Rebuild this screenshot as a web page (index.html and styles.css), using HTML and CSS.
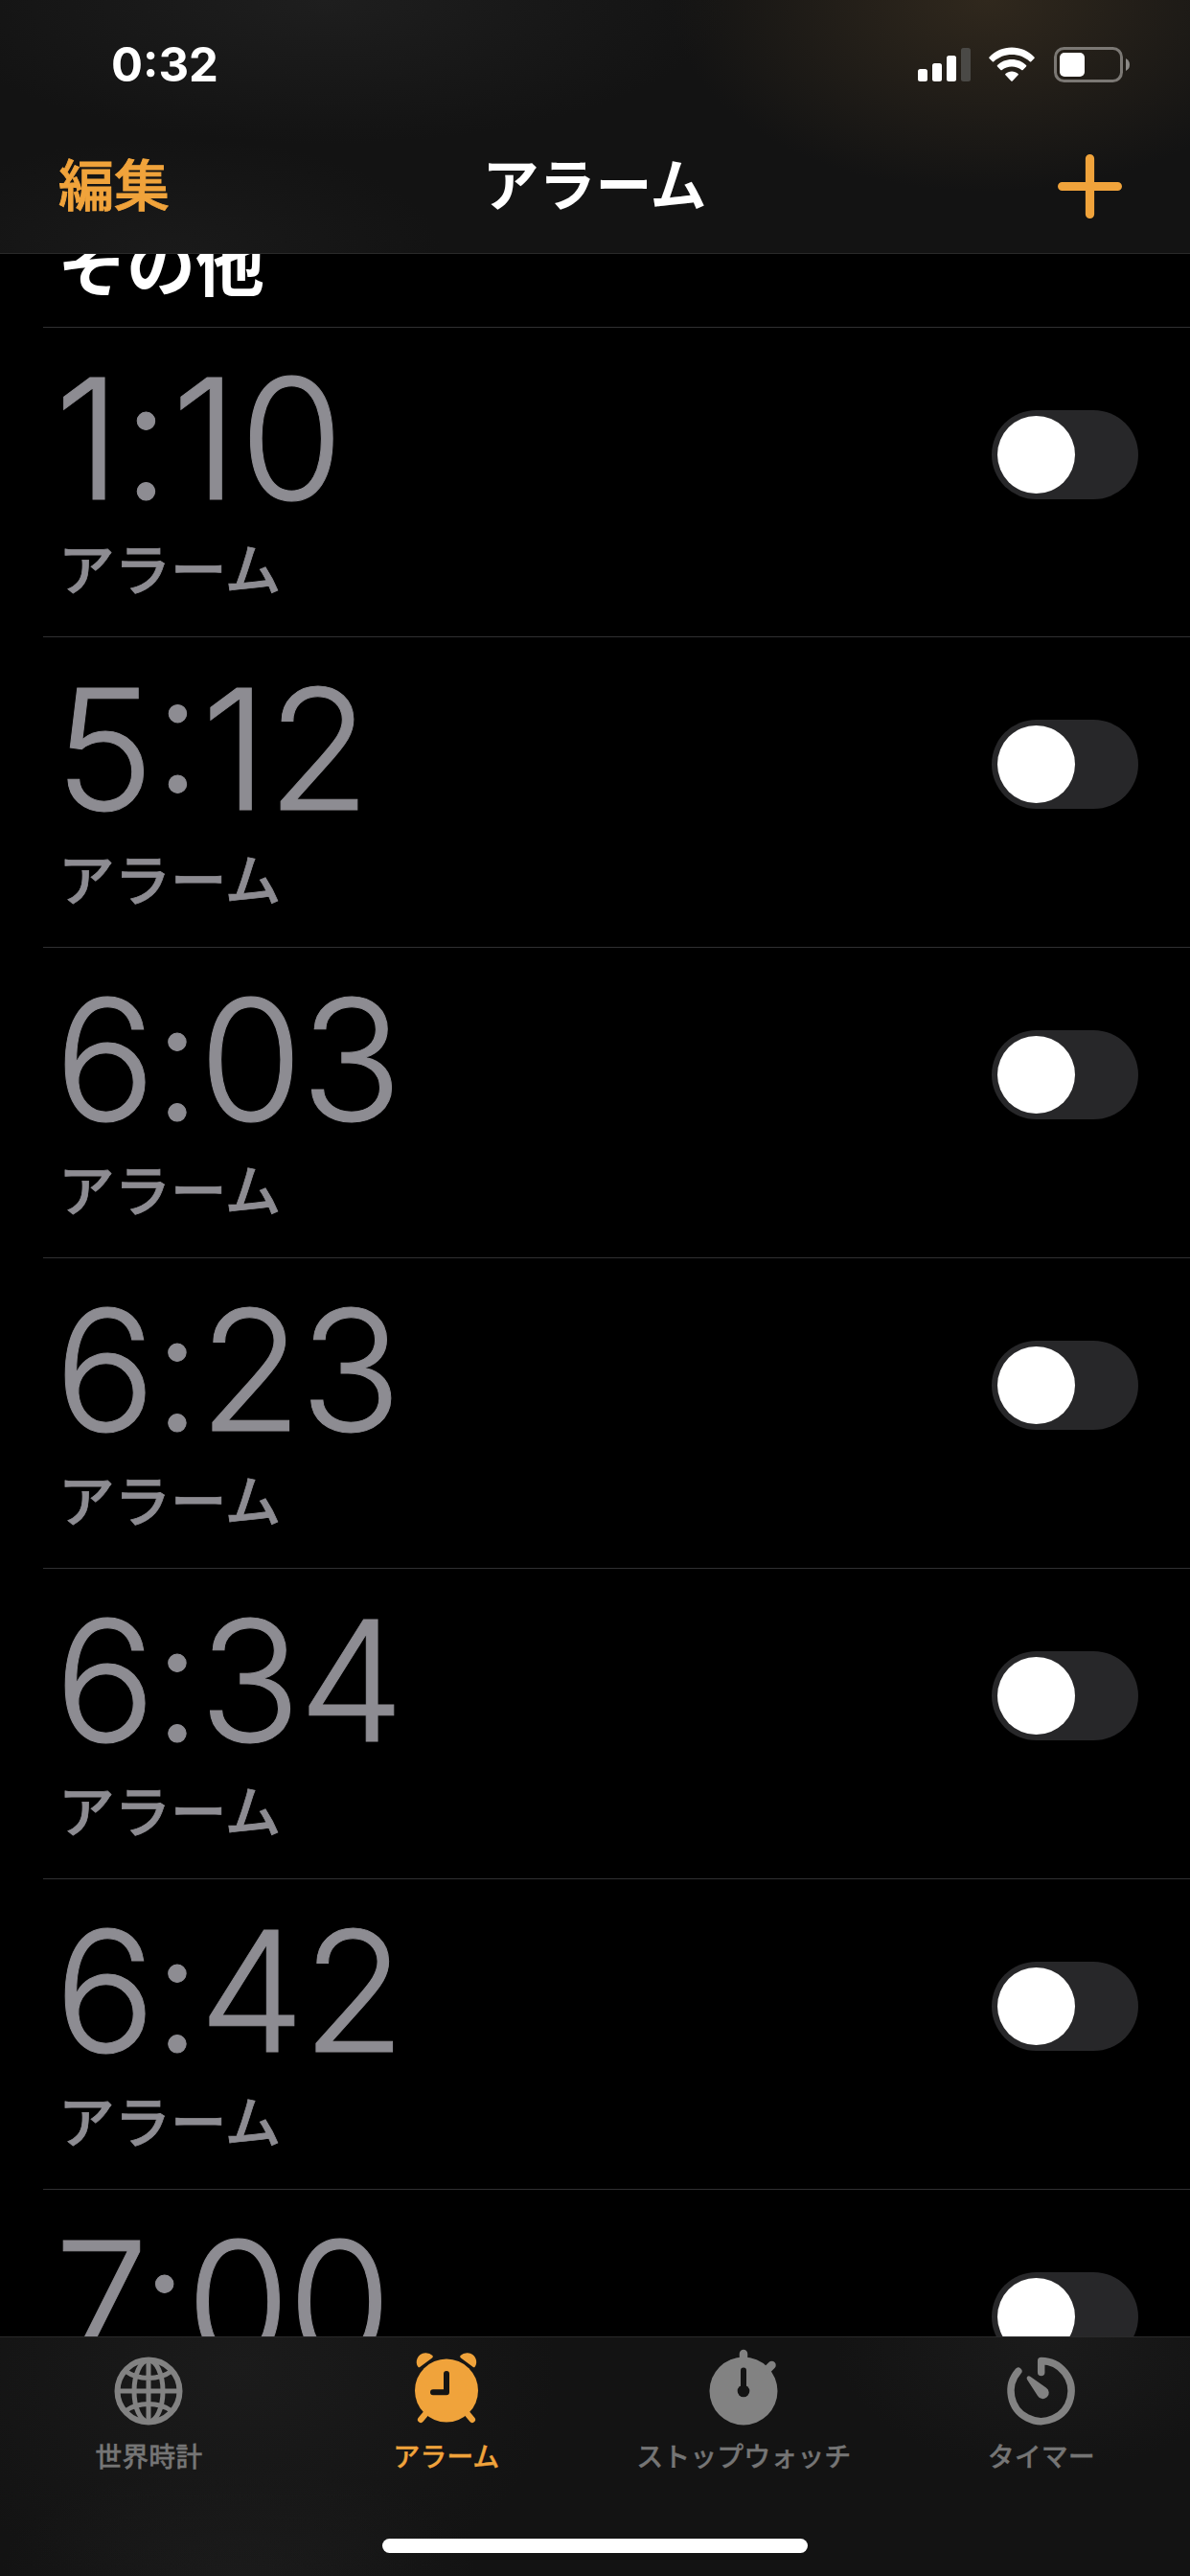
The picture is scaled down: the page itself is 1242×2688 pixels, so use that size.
FILE: index.html
```
<!DOCTYPE html>
<html lang="ja">
<head>
  <meta charset="UTF-8" />
  <meta name="viewport" content="width=device-width, initial-scale=1.0"/>
  <title>アラーム</title>
  <link rel="stylesheet" href="styles.css">
</head>
<body>
  <div class="phone">
    <header class="header">
      <div class="status-bar">
        <span class="clock">0:32</span>
        <div class="status-icons">
          <svg class="signal" width="55" height="36" viewBox="0 0 55 36" fill="#fff">
            <rect x="0" y="22" width="10" height="13" rx="2.5"/>
            <rect x="15" y="16" width="10" height="19" rx="2.5"/>
            <rect x="30" y="8" width="10" height="27" rx="2.5"/>
            <rect x="45" y="0" width="10" height="35" rx="2.5" fill="#4a4946"/>
          </svg>
          <svg class="wifi" width="48" height="37" viewBox="0 0 48 37" fill="#fff">
            <path d="M24 0.5C33 0.5 41.500 4.200 47.400 10.400Q48.200 11.200 47.400 12L44.200 15.200Q43.500 15.800 42.800 15.200C37.800 10.600 31 8 24 8S10.200 10.600 5.200 15.200Q4.500 15.800 3.800 15.200L0.600 12Q-0.200 11.200 0.600 10.400C6.500 4.200 15 0.500 24 0.500Z"/>
            <path d="M24 13C29.800 13 35.200 15.200 39 19Q39.800 19.800 39 20.600L35.600 24Q34.900 24.600 34.200 24C31.500 21.700 27.900 20.400 24 20.400S16.500 21.700 13.800 24Q13.100 24.600 12.400 24L9 20.600Q8.200 19.800 9 19C12.800 15.200 18.200 13 24 13Z"/>
            <path d="M24 25.500C26.500 25.500 28.800 26.400 30.600 27.900Q31.300 28.600 30.600 29.300L24.700 35.500Q24 36.200 23.300 35.500L17.400 29.300Q16.700 28.600 17.400 27.900C19.200 26.400 21.500 25.500 24 25.500Z"/>
          </svg>
          <svg class="battery" width="80" height="37" viewBox="0 0 80 37">
            <rect x="1.500" y="1.500" width="69" height="34" rx="9" fill="none" stroke="#7b7874" stroke-width="3"/>
            <rect x="6" y="6" width="26" height="25" rx="5" fill="#fff"/>
            <path d="M75 12Q79 14 79 18.500T75 25Z" fill="#8b8986"/>
          </svg>
        </div>
      </div>
      <nav class="nav-bar">
        <a class="edit">編集</a>
        <h1>アラーム</h1>
        <a class="add">
          <svg width="67" height="67" viewBox="0 0 67 67" stroke="#f0a33b" stroke-width="9.200" stroke-linecap="round">
            <path d="M33.500 4.600V62.400M4.600 33.500H62.400"/>
          </svg>
        </a>
      </nav>
    </header>

    <main class="alarms">
      <h2>その他</h2>
      <ul>
        <li class="alarm"><div><p class="time wide">1:10</p><p class="label">アラーム</p></div><span class="toggle"></span></li>
        <li class="alarm"><div><p class="time normal">5:12</p><p class="label">アラーム</p></div><span class="toggle"></span></li>
        <li class="alarm"><div><p class="time">6:03</p><p class="label">アラーム</p></div><span class="toggle"></span></li>
        <li class="alarm"><div><p class="time">6:23</p><p class="label">アラーム</p></div><span class="toggle"></span></li>
        <li class="alarm"><div><p class="time">6:34</p><p class="label">アラーム</p></div><span class="toggle"></span></li>
        <li class="alarm"><div><p class="time">6:42</p><p class="label">アラーム</p></div><span class="toggle"></span></li>
        <li class="alarm"><div><p class="time">7:00</p></div><span class="toggle"></span></li>
      </ul>
    </main>

    <footer class="tab-bar">
      <div class="tabs">
        <a class="tab">
          <svg width="80" height="80" viewBox="0 0 80 80" fill="none" stroke="#828282" stroke-width="5">
            <circle cx="40" cy="40" r="32.500" stroke-width="6"/>
            <ellipse cx="40" cy="40" rx="15" ry="32"/>
            <path d="M40 8V72M8 40H72M16.500 19.500Q26 26.500 40 26.500T63.500 19.500M16.500 60.500Q26 53.500 40 53.500T63.500 60.500"/>
          </svg>
          <span>世界時計</span>
        </a>
        <a class="tab active">
          <svg width="80" height="80" viewBox="0 0 80 80" fill="#f0a33b">
            <circle cx="40" cy="39.500" r="33"/>
            <path d="M10.500 15C6.500 10 9.500 0.500 18 0.200Q22.500 0 25.500 3Q26.500 4.200 25 5.500L12.500 14.800Q11.200 15.800 10.500 15Z"/>
            <path d="M69.500 15C73.500 10 70.500 0.500 62 0.200Q57.500 0 54.500 3Q53.500 4.200 55 5.500L67.500 14.800Q68.800 15.800 69.500 15Z"/>
            <path d="M18 64L13.200 69.800M62 64L66.800 69.800" stroke="#f0a33b" stroke-width="6.500" stroke-linecap="round"/>
            <path d="M40 22V41.300H26" fill="none" stroke="#141414" stroke-width="6" stroke-linecap="round" stroke-linejoin="round"/>
          </svg>
          <span>アラーム</span>
        </a>
        <a class="tab">
          <svg width="80" height="80" viewBox="0 0 80 80" fill="#828282" overflow="visible">
            <circle cx="40" cy="40" r="35.500"/>
            <path d="M40 1V8M65.500 17L69.500 13" stroke="#828282" stroke-width="8.500" stroke-linecap="round"/>
            <path d="M40 18.500V38" stroke="#131313" stroke-width="6" stroke-linecap="round"/>
            <circle cx="40" cy="40" r="6.300" fill="#131313"/>
          </svg>
          <span>ストップウォッチ</span>
        </a>
        <a class="tab">
          <svg width="80" height="80" viewBox="0 0 80 80" fill="#828282">
            <path d="M39.700 20.500V8.500A31.500 31.500 0 1 1 15.800 19.300" fill="none" stroke="#828282" stroke-width="7.500" stroke-linecap="round" stroke-linejoin="round"/>
            <path d="M25.200 25Q26.500 23.700 28.500 25L44.800 36.500A6.300 6.300 0 1 1 36 45L25 28Q24 26.200 25.200 25Z"/>
          </svg>
          <span>タイマー</span>
        </a>
      </div>
      <div class="home-indicator"></div>
    </footer>
  </div>
</body>
</html>
```
FILE: styles.css
```
* {
  box-sizing: border-box;
  margin: 0;
  padding: 0;
}

body {
  background: #000;
  color: #fff;
  font-family: Inter, 'Noto Sans CJK JP', sans-serif;
}

.phone {
  display: flex;
  flex-direction: column;
  width: 1242px;
  height: 2688px;
  overflow: hidden;
}

/* header */
.header {
  flex: none;
  height: 265px;
  border-bottom: 1px solid #2a2a2a;
  background:
    radial-gradient(ellipse 330px 200px at 1030px 0, #30281d, transparent),
    radial-gradient(ellipse 420px 150px at 340px 0, #1e1e1e, transparent),
    radial-gradient(ellipse 280px 120px at 180px 264px, #1a1a1a, transparent),
    #131313;
}

.status-bar {
  display: flex;
  justify-content: space-between;
  height: 132px;
  padding: 39px 62px 0 116px;
}

.clock {
  font-size: 49px;
  font-weight: 700;
  line-height: 58px;
}

.status-icons {
  display: flex;
  align-items: flex-start;
  padding-top: 10px;
}

.signal {
  margin-top: 1px;
}

.wifi {
  margin: 0 20px 0 19px;
}

.nav-bar {
  display: grid;
  grid-template-columns: 1fr auto 1fr;
  align-items: center;
  height: 124px;
  padding: 0 71px 0 61px;
}

.nav-bar h1 {
  margin-left: 9px;
  font-size: 59px;
  font-weight: 700;
  line-height: 80px;
}

.edit {
  color: #f0a33b;
  font-size: 58px;
  font-weight: 500;
  line-height: 80px;
  -webkit-text-stroke: 0.9px;
}

.add {
  justify-self: end;
  height: 67px;
}

/* alarm list */
.alarms {
  flex: 1;
  min-height: 0;
  overflow: hidden;
}

.alarms h2 {
  height: 100px;
  margin: -24px 0 0 60px;
  font-size: 72px;
  font-weight: 700;
  line-height: 72px;
}

.alarms ul {
  margin-left: 45px;
  list-style: none;
}

.alarm {
  display: flex;
  justify-content: space-between;
  height: 324px;
  padding: 34px 54px 0 17px;
  border-top: 1px solid #303032;
  color: #8d8c92;
}

.alarm:first-child {
  height: 323px;
}

.alarm:first-child .time {
  margin-top: -1px;
}

.time {
  margin-left: -5px;
  font-size: 175px;
  font-weight: 300;
  line-height: 164px;
  letter-spacing: -2px;
  -webkit-text-stroke: 1px;
}

.time.normal {
  letter-spacing: 0;
}

.time.wide {
  letter-spacing: 2px;
}

.label {
  margin: 16px 0 0 -1px;
  font-size: 58.5px;
  font-weight: 500;
  line-height: 80px;
  -webkit-text-stroke: 0.8px;
}

.toggle {
  width: 153px;
  height: 93px;
  margin-top: 52px;
  padding: 6px;
  border-radius: 47px;
  background: #272729;
}

.toggle::before {
  content: "";
  display: block;
  width: 81px;
  height: 81px;
  border-radius: 50%;
  background: #fff;
}

/* tab bar */
.tab-bar {
  flex: none;
  height: 250px;
  border-top: 1px solid #2a2a2a;
  background:
    radial-gradient(ellipse 330px 260px at 250px 30px, #1b1b1b, transparent),
    radial-gradient(ellipse 250px 120px at 250px 250px, #1b1b1b, transparent),
    radial-gradient(ellipse 220px 140px at 1090px 0, #1b1b1b, transparent),
    #131313;
}

.tabs {
  display: grid;
  grid-template-columns: repeat(4, 1fr);
  height: 210px;
  padding-top: 16px;
}

.tab {
  display: flex;
  flex-direction: column;
  align-items: center;
  color: #757575;
  font-size: 28px;
  font-weight: 500;
  -webkit-text-stroke: 0.3px;
}

.tab span {
  margin-top: 9px;
  line-height: 40px;
}

.tab.active {
  color: #f0a33b;
}

.home-indicator {
  width: 444px;
  height: 15px;
  margin: 0 auto;
  border-radius: 8px;
  background: #fff;
}
```
